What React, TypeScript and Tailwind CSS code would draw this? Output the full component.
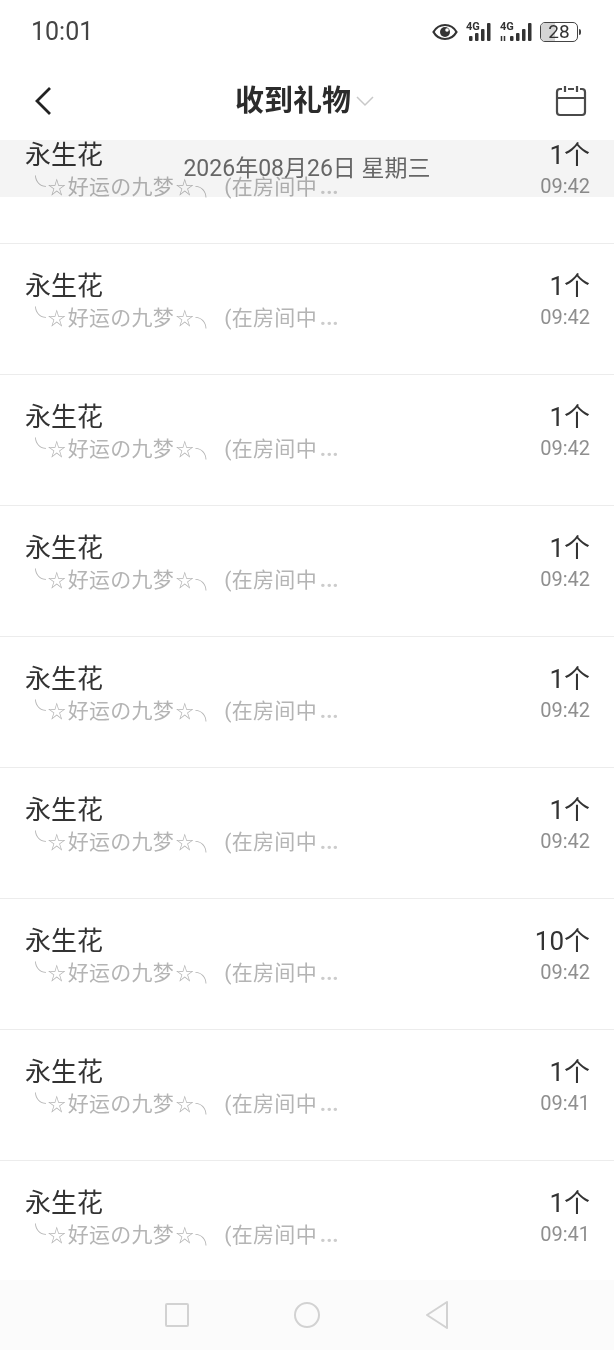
import React from 'react';

const FONT = "font-['Roboto','Noto_Sans_CJK_SC',sans-serif]";

interface GiftRow {
  count: string;
  time: string;
}

const ROWS: GiftRow[] = [
  { count: '1个', time: '09:42' },
  { count: '1个', time: '09:42' },
  { count: '1个', time: '09:42' },
  { count: '1个', time: '09:42' },
  { count: '1个', time: '09:42' },
  { count: '1个', time: '09:42' },
  { count: '10个', time: '09:42' },
  { count: '1个', time: '09:41' },
  { count: '1个', time: '09:41' },
];

function EyeIcon() {
  return (
    <svg width="26" height="18" viewBox="0 0 26 18" aria-hidden>
      <path d="M1.5 9C4 4.500 8 2 13 2s9 2.500 11.500 7C22 13.500 18 16 13 16S4 13.500 1.500 9Z" fill="none" stroke="#333" strokeWidth="2.200" />
      <circle cx="13" cy="9" r="5" fill="#333" />
      <circle cx="15" cy="7" r="1.800" fill="#fff" />
    </svg>
  );
}

/** 4G mark with four rising bars; the second SIM has a data arrow in front */
function Signal({ data }: { data?: boolean }) {
  const start = data ? 11 : 4;
  const bars = [5, 8, 12, 18];
  return (
    <div className={`relative h-[20px] ${data ? 'w-[35px]' : 'w-[28px]'}`}>
      <span className="absolute left-[1px] top-[-1px] text-[11px] font-bold leading-[11px] text-[#333]">4G</span>
      <svg width={data ? 35 : 28} height="20" viewBox={`0 0 ${data ? 35 : 28} 20`} aria-hidden>
        {data && <path d="M2.500 14v5M5.500 14v5" stroke="#333" strokeWidth="1.500" />}
        {bars.map((h, i) => (
          <rect key={i} x={start + i * 6} y={19 - h} width="3.500" height={h} rx="1" fill="#333" />
        ))}
      </svg>
    </div>
  );
}

function Battery() {
  return (
    <div className="flex items-center gap-[1px]">
      <div className="relative flex h-[20px] w-[38px] items-center justify-center overflow-hidden rounded-[5px] border border-[#444]">
        <div className="absolute inset-y-0 left-0 w-[14px] bg-[#d4d4d4]" />
        <span className="relative text-[19px] leading-none text-[#333]">28</span>
      </div>
      <div className="h-[6px] w-[2px] rounded-r bg-[#444]" />
    </div>
  );
}

function ListRow({ row }: { row: GiftRow }) {
  return (
    <div className="flex h-[131px] shrink-0 justify-between border-b border-[#ececec] pl-[25px] pr-[24px] pt-[27px]">
      <div>
        <div className="text-[26px] leading-[30px] text-[#333]">永生花</div>
        <div className="mt-[-1px] text-[21px] leading-[32px] tracking-[0.3px] whitespace-nowrap text-[#b4b4b4]">
          ╰<span className="px-[1.500px] text-[18px] leading-none">☆</span>好运の九梦
          <span className="px-[1.500px] text-[18px] leading-none">☆</span>╮ <span className="ml-[2px]">(在房间中</span>
          <span className="ml-[2px] text-[30px] leading-none text-[#cccccc]">…</span>
        </div>
      </div>
      <div className="flex flex-col items-end">
        <div className="text-[26px] leading-[30px] text-[#333]">{row.count}</div>
        <div className="mt-[1px] text-[20px] leading-[30px] text-[#8f8f8f]">{row.time}</div>
      </div>
    </div>
  );
}

export default function App() {
  return (
    <div className={`flex h-[1350px] w-[614px] flex-col overflow-hidden bg-white ${FONT}`}>
      {/* status bar */}
      <div className="flex h-[63px] shrink-0 items-center justify-between pl-[31px] pr-[33px]">
        <span className="text-[25px] text-[#444]">10:01</span>
        <div className="flex items-center gap-[6px]">
          <div className="mr-[1px]">
            <EyeIcon />
          </div>
          <Signal />
          <Signal data />
          <Battery />
        </div>
      </div>

      {/* title bar */}
      <div className="relative flex h-[77px] shrink-0 items-center justify-between pb-[2px] pl-[33px] pr-[27px]">
        <svg width="20" height="32" viewBox="0 0 20 32" aria-hidden>
          <path d="M17 3 4 16l13 13" fill="none" stroke="#222" strokeWidth="2.800" />
        </svg>
        <div className="absolute left-[235px] top-[18px] flex items-center gap-[4px]">
          <span className="text-[29px] font-bold leading-[40px] text-[#2b2b2b]">收到礼物</span>
          <svg width="20" height="12" viewBox="0 0 20 12" aria-hidden>
            <path d="M2 2l8 8 8-8" fill="none" stroke="#c8c8c8" strokeWidth="1.500" />
          </svg>
        </div>
        <svg width="32" height="32" viewBox="0 0 32 32" aria-hidden>
          <path
            d="M7 4H5a3 3 0 0 0-3 3v20a3 3 0 0 0 3 3h22a3 3 0 0 0 3-3V7a3 3 0 0 0-3-3h-2M13 4h6M2 13h28M10 1v6M22 1v6"
            fill="none"
            stroke="#4a4a4a"
            strokeWidth="2.200"
          />
        </svg>
      </div>

      {/* list with sticky date band on top */}
      <div className="relative min-h-0 flex-1 overflow-hidden">
        <div className="mt-[-27px] flex flex-col">
          {ROWS.map((row, i) => (
            <ListRow key={i} row={row} />
          ))}
        </div>
        <div className="absolute inset-x-0 top-0 flex h-[57px] items-center justify-center bg-[#f4f4f4] pt-[1px] text-[23px] text-[#666] mix-blend-multiply">
          2026年08月26日 星期三
        </div>
      </div>

      {/* nav bar */}
      <div className="flex h-[70px] shrink-0 items-center justify-center gap-[105px] bg-[#fbfbfb]">
        <div className="h-[24px] w-[24px] rounded-[2px] border-2 border-[#d2d2d2]" />
        <div className="h-[26px] w-[26px] rounded-full border-2 border-[#d2d2d2]" />
        <svg width="24" height="30" viewBox="0 0 24 30" aria-hidden>
          <path d="M22 2 2 15l20 13Z" fill="none" stroke="#d2d2d2" strokeWidth="2" strokeLinejoin="round" />
        </svg>
      </div>
    </div>
  );
}
